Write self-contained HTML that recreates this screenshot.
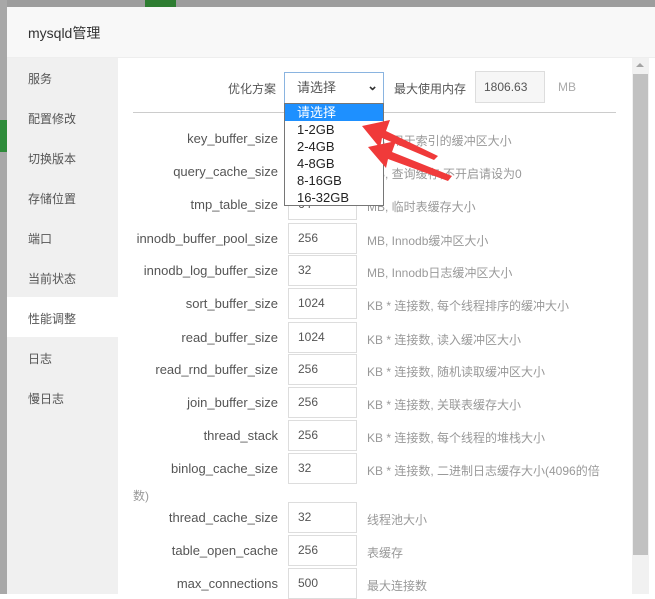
<!DOCTYPE html>
<html><head><meta charset="utf-8"><style>
body{margin:0;width:655px;height:594px;overflow:hidden;position:relative;background:#fff;font-family:"Liberation Sans","Noto Sans CJK SC",sans-serif;font-size:12px;color:#555}
.a{position:absolute}
.lbl{position:absolute;right:377px;text-align:right;color:#555;font-size:13px;white-space:nowrap}
.inp{position:absolute;left:288px;width:69px;height:31px;border:1px solid #ddd;box-sizing:border-box;padding-left:9px;line-height:29px;color:#555;font-size:12px}
.ds{position:absolute;left:367px;color:#999;font-size:12px;white-space:nowrap}
.nav{position:absolute;left:28px;font-size:12px;color:#555}
</style></head><body>
<div class="a" style="left:0;top:0;width:655px;height:7px;background:#9d9d9d"></div>
<div class="a" style="left:145px;top:0;width:31px;height:7px;background:#2e7d32"></div>
<div class="a" style="left:0;top:0;width:7px;height:594px;background:#a8a8a8"></div>
<div class="a" style="left:0;top:120px;width:7px;height:32px;background:#2e8b3a"></div>
<div class="a" style="left:7px;top:7px;width:648px;height:50px;background:#f8f8f8;border-bottom:1px solid #eee"></div>
<div class="a" style="left:28px;top:23px;font-size:14px;color:#333">mysqld管理</div>
<div class="a" style="left:7px;top:58px;width:111px;height:536px;background:#f0f0f0"></div>
<div class="a" style="left:7px;top:297px;width:111px;height:40px;background:#fff"></div>
<div class="nav" style="top:70px">服务</div>
<div class="nav" style="top:110px">配置修改</div>
<div class="nav" style="top:150px">切换版本</div>
<div class="nav" style="top:190px">存储位置</div>
<div class="nav" style="top:230px">端口</div>
<div class="nav" style="top:270px">当前状态</div>
<div class="nav" style="top:310px">性能调整</div>
<div class="nav" style="top:350px">日志</div>
<div class="nav" style="top:390px">慢日志</div>
<div class="a" style="left:632px;top:58px;width:17px;height:536px;background:#f1f1f1"></div>
<div class="a" style="left:636px;top:63px;width:0;height:0;border-left:4px solid transparent;border-right:4px solid transparent;border-bottom:4px solid #a3a3a3"></div>
<div class="a" style="left:633px;top:74px;width:15px;height:481px;background:#c1c1c1"></div>
<div class="a" style="left:228px;top:80px;color:#555;font-size:12px">优化方案</div>
<div class="a" style="left:284px;top:72px;width:100px;height:32px;border:1px solid #8ab4e0;box-sizing:border-box;padding-left:12px;line-height:30px;color:#555;font-size:13px">请选择<span style="position:absolute;right:5px;top:-2px;font-size:13px;color:#333;font-weight:bold">&#8964;</span></div>
<div class="a" style="left:394px;top:80px;color:#555">最大使用内存</div>
<div class="a" style="left:475px;top:71px;width:70px;height:32px;border:1px solid #ddd;background:#f6f6f6;box-sizing:border-box;line-height:30px;padding-left:8px;color:#555">1806.63</div>
<div class="a" style="left:558px;top:80px;color:#aaa">MB</div>
<div class="a" style="left:133px;top:112px;width:483px;height:1px;background:#ccc"></div>

<div class="lbl" style="top:131px">key_buffer_size</div><div class="inp" style="top:123px"></div><div class="ds" style="top:132px">MB, 用于索引的缓冲区大小</div>
<div class="lbl" style="top:164px">query_cache_size</div><div class="inp" style="top:156px"></div><div class="ds" style="top:165px">MB, 查询缓存,不开启请设为0</div>
<div class="lbl" style="top:197px">tmp_table_size</div><div class="inp" style="top:189px">64</div><div class="ds" style="top:198px">MB, 临时表缓存大小</div>
<div class="lbl" style="top:231px">innodb_buffer_pool_size</div><div class="inp" style="top:223px">256</div><div class="ds" style="top:232px">MB, Innodb缓冲区大小</div>
<div class="lbl" style="top:263px">innodb_log_buffer_size</div><div class="inp" style="top:255px">32</div><div class="ds" style="top:264px">MB, Innodb日志缓冲区大小</div>
<div class="lbl" style="top:296px">sort_buffer_size</div><div class="inp" style="top:288px">1024</div><div class="ds" style="top:297px">KB * 连接数, 每个线程排序的缓冲大小</div>
<div class="lbl" style="top:330px">read_buffer_size</div><div class="inp" style="top:322px">1024</div><div class="ds" style="top:331px">KB * 连接数, 读入缓冲区大小</div>
<div class="lbl" style="top:362px">read_rnd_buffer_size</div><div class="inp" style="top:354px">256</div><div class="ds" style="top:363px">KB * 连接数, 随机读取缓冲区大小</div>
<div class="lbl" style="top:395px">join_buffer_size</div><div class="inp" style="top:387px">256</div><div class="ds" style="top:396px">KB * 连接数, 关联表缓存大小</div>
<div class="lbl" style="top:428px">thread_stack</div><div class="inp" style="top:420px">256</div><div class="ds" style="top:429px">KB * 连接数, 每个线程的堆栈大小</div>
<div class="lbl" style="top:461px">binlog_cache_size</div><div class="inp" style="top:453px">32</div><div class="ds" style="top:462px">KB * 连接数, 二进制日志缓存大小(4096的倍</div>
<div class="a" style="left:133px;top:487px;color:#999">数)</div>
<div class="lbl" style="top:510px">thread_cache_size</div><div class="inp" style="top:502px">32</div><div class="ds" style="top:511px">线程池大小</div>
<div class="lbl" style="top:543px">table_open_cache</div><div class="inp" style="top:535px">256</div><div class="ds" style="top:544px">表缓存</div>
<div class="lbl" style="top:576px">max_connections</div><div class="inp" style="top:568px">500</div><div class="ds" style="top:577px">最大连接数</div>

<div class="a" style="left:284px;top:103px;width:100px;height:103px;border:1px solid #767676;box-sizing:border-box;background:#fff;font-size:13px;color:#222;line-height:17px">
<div style="background:#1e90ff;color:#fff;padding-left:12px">请选择</div>
<div style="padding-left:12px">1-2GB</div><div style="padding-left:12px">2-4GB</div><div style="padding-left:12px">4-8GB</div><div style="padding-left:12px">8-16GB</div><div style="padding-left:12px">16-32GB</div>
</div>
<svg class="a" style="left:0;top:0" width="655" height="594">
<polygon points="362,126 390,120 386,131 438,156 434,160 382,138 380,148" fill="#f03a3a"/>
<polygon points="368,147 396,141 392,152 452,176 448,181 388,159 386,168" fill="#f03a3a"/>
</svg>
</body></html>
